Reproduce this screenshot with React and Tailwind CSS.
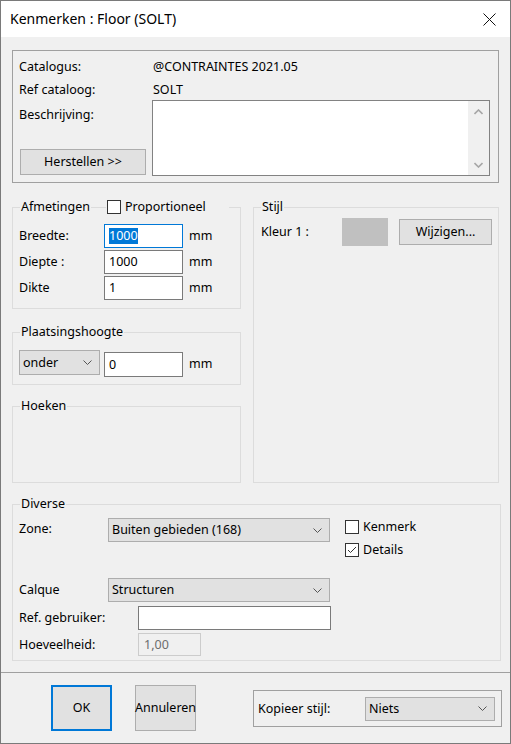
import React from 'react';

// small dropdown arrow used by the combo boxes
const Chevron = () => (
  <svg width="9" height="5" viewBox="0 0 9 5" className="shrink-0">
    <polyline points="0.5,0.5 4.5,4.5 8.5,0.5" fill="none" stroke="#555" strokeWidth="1" />
  </svg>
);

const Select = ({ value, className }) => (
  <div className={`flex items-center justify-between border border-[#adadad] bg-[#e1e1e1] pl-[3px] pr-[7px] ${className}`}>
    <span>{value}</span>
    <Chevron />
  </div>
);

const Group = ({ title, className = '', children }) => (
  <fieldset className={`border border-[#dcdcdc] ${className}`}>
    <legend className="ml-[7px] px-[1px] leading-[16px]">{title}</legend>
    {children}
  </fieldset>
);

const Checkbox = ({ checked }) => (
  <div className="w-[14px] h-[14px] border border-[#333] bg-white shrink-0">
    {checked && (
      <svg width="12" height="12" viewBox="0 0 12 12">
        <polyline points="2,6 4.5,8.5 10,3" fill="none" stroke="#333" strokeWidth="1" />
      </svg>
    )}
  </div>
);

const Button = ({ children, className = '' }) => (
  <div className={`flex items-center justify-center bg-[#e1e1e1] border border-[#adadad] ${className}`}>
    {children}
  </div>
);

const dims = [
  { label: 'Breedte:', value: '1000', focus: true },
  { label: 'Diepte :', value: '1000' },
  { label: 'Dikte', value: '1' },
];

export default function App() {
  return (
    <div className="w-[511px] h-[744px] border border-[#7a7a7a] bg-[#f0f0f0] flex flex-col font-['Noto_Sans',sans-serif] text-[12.5px] leading-[16px] text-black overflow-hidden">
      {/* title bar */}
      <div className="h-[36px] bg-white flex items-center justify-between pl-[9px] pr-[14px] shrink-0">
        <span className="text-[14px]">Kenmerken : Floor (SOLT)</span>
        <svg width="13" height="13" viewBox="0 0 13 13">
          <path d="M0.5 0.5 L12.5 12.5 M12.5 0.5 L0.5 12.5" stroke="#111" strokeWidth="1" />
        </svg>
      </div>

      <div className="px-[11px] pt-[13px]">
        {/* catalogue box */}
        <div className="border border-[#a0a0a0] pt-[8px] pb-[6px] pl-[6px] pr-[8px]">
          <div className="flex h-[16px]">
            <span className="w-[134px]">Catalogus:</span>
            <span>@CONTRAINTES 2021.05</span>
          </div>
          <div className="mt-[7px] flex h-[16px]">
            <span className="w-[134px]">Ref cataloog:</span>
            <span>SOLT</span>
          </div>
          <div className="mt-[2px] flex">
            <div className="w-[133px] flex flex-col justify-between pb-[1px]">
              <span className="mt-[7px]">Beschrijving:</span>
              <Button className="ml-[1px] w-[126px] h-[26px]">Herstellen &gt;&gt;</Button>
            </div>
            <div className="flex-1 h-[76px] border border-[#828282] bg-white flex justify-end">
              <div className="w-[21px] bg-[#f0f0f0] flex flex-col items-center justify-between pt-[8px] pb-[7px]">
                <svg width="9" height="6" viewBox="0 0 9 6">
                  <polyline points="0.5,5 4.5,1 8.5,5" fill="none" stroke="#a6a6a6" strokeWidth="1.6" />
                </svg>
                <svg width="9" height="6" viewBox="0 0 9 6">
                  <polyline points="0.5,1 4.5,5 8.5,1" fill="none" stroke="#a6a6a6" strokeWidth="1.6" />
                </svg>
              </div>
            </div>
          </div>
        </div>

        {/* middle: dimensions + style */}
        <div className="mt-[16px] flex gap-[12px] items-stretch">
          <div className="w-[229px] flex flex-col">
            <div className="relative">
              <Group title="Afmetingen" className="w-[229px]">
                <div className="pt-[9px] pb-[8px] pl-[6px] flex flex-col gap-[2px]">
                  {dims.map((d) => (
                    <div key={d.label} className="flex items-center h-[24px]">
                      <span className="w-[85px]">{d.label}</span>
                      <div className={`w-[79px] h-[24px] border bg-white flex items-center pl-[4px] ${d.focus ? 'border-[#0078d7]' : 'border-[#7a7a7a]'}`}>
                        {d.focus ? <span className="bg-[#0078d7] text-white">{d.value}</span> : <span>{d.value}</span>}
                      </div>
                      <span className="ml-[6px]">mm</span>
                    </div>
                  ))}
                </div>
              </Group>
              <div className="absolute left-[94px] top-0 h-[16px] w-[123px] bg-[#f0f0f0] flex items-center gap-[4px] pl-[1px]">
                <Checkbox />
                <span>Proportioneel</span>
              </div>
            </div>

            <Group title="Plaatsingshoogte" className="mt-[15px] w-[229px]">
              <div className="pt-[10px] pb-[7px] pl-[6px] flex items-start">
                <Select value="onder" className="w-[81px] h-[25px]" />
                <div className="ml-[4px] mt-[2px] w-[79px] h-[25px] border border-[#7a7a7a] bg-white flex items-center pl-[4px]">0</div>
                <span className="ml-[6px] mt-[6px]">mm</span>
              </div>
            </Group>

            <Group title="Hoeken" className="mt-[13px] w-[229px] h-[85px]" />
          </div>

          <Group title="Stijl" className="flex-1">
            <div className="mt-[3px] pl-[7px] flex items-center">
              <span className="w-[81px]">Kleur 1 :</span>
              <div className="w-[46px] h-[28px] bg-[#c0c0c0]" />
              <Button className="ml-[11px] w-[93px] h-[26px]">Wijzigen...</Button>
            </div>
          </Group>
        </div>

        {/* misc */}
        <Group title="Diverse" className="mt-[13px] w-[489px]">
          <div className="flex pl-[6px] pb-[4px]">
            <div className="w-[312px]">
              <div className="mt-[6px] flex items-start">
                <span className="w-[89px] mt-[3px]">Zone:</span>
                <Select value="Buiten gebieden (168)" className="w-[222px] h-[24px]" />
              </div>
              <div className="mt-[36px] flex items-center">
                <span className="w-[89px]">Calque</span>
                <Select value="Structuren" className="w-[222px] h-[24px]" />
              </div>
              <div className="mt-[4px] flex items-center">
                <span className="w-[119px]">Ref. gebruiker:</span>
                <div className="w-[193px] h-[24px] border border-[#7a7a7a] bg-white" />
              </div>
              <div className="mt-[3px] flex items-center">
                <span className="w-[119px]">Hoeveelheid:</span>
                <div className="w-[63px] h-[23px] border border-[#cccccc] pl-[5px] text-[#6d6d6d] flex items-center">1,00</div>
              </div>
            </div>
            <div className="ml-[14px] mt-[8px] flex flex-col gap-[9px]">
              <div className="flex items-center gap-[4px] h-[14px]">
                <Checkbox />
                <span>Kenmerk</span>
              </div>
              <div className="flex items-center gap-[4px] h-[14px]">
                <Checkbox checked />
                <span>Details</span>
              </div>
            </div>
          </div>
        </Group>
      </div>

      {/* footer */}
      <div className="mt-[11px] border-t border-[#a0a0a0] flex items-start pt-[12px] pl-[50px]">
        <div className="w-[61px] h-[46px] border-2 border-[#0078d7] bg-[#e1e1e1] flex items-center justify-center">OK</div>
        <Button className="ml-[23px] w-[61px] h-[46px]">Annuleren</Button>
        <div className="ml-[57px] mt-[5px] w-[249px] h-[37px] border border-[#a0a0a0] flex items-center pl-[4px]">
          <span className="w-[107px]">Kopieer stijl:</span>
          <Select value="Niets" className="w-[130px] h-[24px]" />
        </div>
      </div>
    </div>
  );
}
